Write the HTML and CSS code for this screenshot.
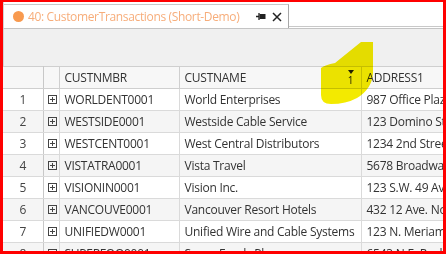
FILE: index.html
```html
<!DOCTYPE html>
<html lang="en">
<head>
  <meta charset="UTF-8" />
  <title>CustomerTransactions</title>
  <link rel="stylesheet" href="styles.css">
</head>
<body>
  <div class="frame">
    <div class="tabstrip">
      <div class="tab">
        <span class="dot"></span>
        <span class="title">40: CustomerTransactions (Short-Demo)</span>
        <svg class="pin" width="10" height="9" viewBox="0 0 10 9">
          <path d="M0 4.5h3M3 1v7" stroke="#222" stroke-width="1.3" fill="none"/>
          <rect x="3.5" y="2" width="6" height="5" fill="#222"/>
        </svg>
        <svg class="close" width="10" height="10" viewBox="0 0 10 10">
          <path d="M1 1l8 8M9 1l-8 8" stroke="#222" stroke-width="1.5"/>
        </svg>
      </div>
      <div class="tabfill"></div>
    </div>

    <div class="toolbar"></div>

    <table class="grid">
      <colgroup>
        <col class="c-num"><col class="c-exp"><col class="c-nmbr"><col class="c-name"><col class="c-addr">
      </colgroup>
      <thead>
        <tr>
          <th></th>
          <th></th>
          <th>CUSTNMBR</th>
          <th class="sorted">CUSTNAME<span class="sort"><i></i>1</span></th>
          <th>ADDRESS1</th>
        </tr>
      </thead>
      <tbody id="rows"></tbody>
    </table>

    <svg class="marker" width="56" height="66" viewBox="320 40 56 66">
      <path d="M361 42 L373 42 L373 73 Q372 89 357 98 Q346 104 331 104 Q321 104 321 95 L321 68 Q325 65 335 63 Z" fill="#f3ea00"/>
    </svg>
  </div>

  <script>
    const data = [
      ['WORLDENT0001', 'World Enterprises', '987 Office Plaza'],
      ['WESTSIDE0001', 'Westside Cable Service', '123 Domino Street'],
      ['WESTCENT0001', 'West Central Distributors', '1234 2nd Street'],
      ['VISTATRA0001', 'Vista Travel', '5678 Broadway'],
      ['VISIONIN0001', 'Vision Inc.', '123 S.W.  49 Ave.'],
      ['VANCOUVE0001', 'Vancouver Resort Hotels', '432 12 Ave. North'],
      ['UNIFIEDW0001', 'Unified Wire and Cable Systems', '123 N. Meriam'],
      ['SUPERFOO0001', 'Super Foods Plus', '6543 N.E. Rush']
    ];
    const plus = '<svg width="9" height="9" viewBox="0 0 9 9"><rect x="0.5" y="0.5" width="8" height="8" fill="none" stroke="#444"/><path d="M2 4.5h5M4.5 2v5" stroke="#444"/></svg>';
    document.getElementById('rows').innerHTML = data.map((r, i) =>
      `<tr><td class="num">${i + 1}</td><td class="exp">${plus}</td><td>${r[0]}</td><td>${r[1]}</td><td>${r[2]}</td></tr>`
    ).join('');
  </script>
</body>
</html>
```

FILE: styles.css
```css
body {
  margin: 0;
  width: 446px;
  height: 254px;
  overflow: hidden;
  background: #ffffff;
  font-family: 'Open Sans', 'Noto Sans', sans-serif;
  color: #333;
}
.frame {
  position: relative;
  box-sizing: border-box;
  width: 446px;
  height: 254px;
  border: 3px solid #ff0000;
  border-top-width: 2px;
  overflow: hidden;
}
.tabstrip {
  display: flex;
  height: 26px;
  padding-top: 2px;
  box-sizing: border-box;
  border-left: 1px solid #d4d4d4;
}
.tab {
  display: flex;
  align-items: center;
  width: 285px;
  box-sizing: border-box;
  border: 1px solid #c8c8c8;
  border-bottom: none;
  border-left: none;
  border-right-color: #a8a8a8;
  background: #fff;
  padding-left: 9px;
}
.dot {
  flex: none;
  width: 11px;
  height: 11px;
  border-radius: 50%;
  background: #f89a4f;
  margin-right: 4px;
}
.title {
  font-size: 12px;
  letter-spacing: -0.35px;
  color: #f7ad7a;
  white-space: nowrap;
}
.pin {
  flex: none;
  margin-left: 17px;
}
.close {
  flex: none;
  margin-left: 6px;
}
.tabfill {
  flex: 1;
  border-bottom: 1px solid #c8c8c8;
  margin-bottom: 1px;
}
.toolbar {
  height: 37px;
  background: #f0f0f0;
  border-top: 1px solid #c4c4c4;
  border-left: 1px solid #d4d4d4;
}
.grid {
  border-collapse: collapse;
  table-layout: fixed;
  width: 460px;
  font-size: 12px;
  letter-spacing: -0.25px;
}
.c-num { width: 40px; }
.c-exp { width: 16px; }
.c-nmbr { width: 120px; }
.c-name { width: 182px; }
.c-addr { width: 102px; }
.grid th, .grid td {
  height: 21px;
  padding: 0 0 0 5px;
  border: 1px solid #dadada;
  border-left: none;
  white-space: nowrap;
  overflow: hidden;
  text-align: left;
  vertical-align: middle;
}
.grid th {
  font-weight: normal;
  color: #333;
  background: #f7f7f7;
  border-top-color: #cfcfcf;
  border-bottom-color: #cfcfcf;
  border-right-color: #cfcfcf;
  position: relative;
}
.grid tbody tr:nth-child(even) td {
  background: #f5f5f5;
}
.grid td.num {
  text-align: center;
  padding: 0;
  color: #444;
  border-right-color: #c8c8c8;
}
.grid th:first-child {
  border-right-color: #c8c8c8;
}
.grid td.exp {
  padding: 0 0 0 4px;
}
.grid td.exp svg {
  display: block;
}
.sort {
  position: absolute;
  right: 7px;
  top: 3px;
  font-size: 10px;
  line-height: 10px;
  text-align: center;
  color: #222;
}
.sort i {
  display: block;
  margin: 0 auto 1px;
  width: 0;
  height: 0;
  border-left: 3px solid transparent;
  border-right: 3px solid transparent;
  border-top: 4px solid #222;
}
.marker {
  position: absolute;
  left: 317px;
  top: 38px;
  mix-blend-mode: multiply;
}
```
